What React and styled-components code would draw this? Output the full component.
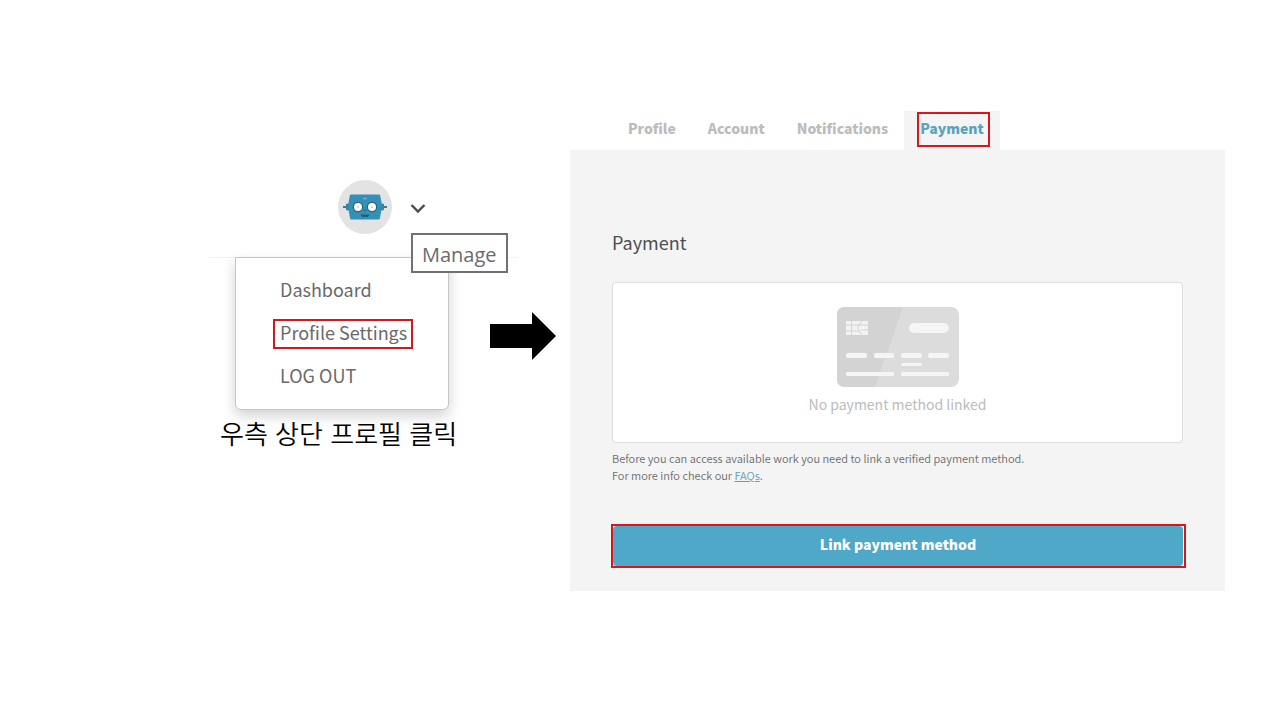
import styled, { createGlobalStyle } from "styled-components";
import { useState } from "react";

const GlobalStyle = createGlobalStyle`
  * {
    box-sizing: border-box;
  }
  body {
    margin: 0;
    background: #ffffff;
    font-family: "Noto Sans CJK KR", sans-serif;
  }
`;

const Guide = styled.main`
  display: flex;
  align-items: flex-start;
  padding: 111px 55px 0 209px;
`;

const ProfileStep = styled.section`
  width: 281px;
  flex-shrink: 0;
  margin-top: 69px;
`;

const ProfileHeader = styled.div`
  display: flex;
  align-items: flex-start;
  gap: 16px;
  height: 78px;
  margin-right: -28px;
  padding-left: 129px;
  border-bottom: 1px solid #f2f2f2;
`;

const ManageButton = styled.button`
  position: relative;
  width: 20px;
  height: 54px;
  padding: 0;
  border: none;
  background: none;
`;

const Tooltip = styled.span`
  position: absolute;
  z-index: 1;
  top: 53px;
  left: 3px;
  height: 40px;
  padding: 0 9px;
  border: 2px solid #707174;
  background: #ffffff;
  color: #6a6b6e;
  font-family: "Open Sans", sans-serif;
  font-size: 20px;
  line-height: 40px;
`;

const Menu = styled.nav`
  display: flex;
  flex-direction: column;
  align-items: flex-start;
  gap: 13px;
  width: 214px;
  margin: -1px 0 0 26px;
  padding: 18px 0 17px 37px;
  border: 1px solid #c6c6c6;
  border-radius: 0 0 6px 6px;
  background: #ffffff;
  box-shadow: 0 6px 14px rgba(0, 0, 0, 0.18);
`;

const MenuLink = styled.a`
  height: 30px;
  padding: 0 4px 0 5px;
  border: 2px solid ${(props) => (props.$marked ? "#d3191c" : "transparent")};
  color: #69696b;
  font-size: 18px;
  line-height: 22px;
  text-decoration: none;
`;

const Caption = styled.p`
  margin: 5px 0 0 11px;
  color: #000000;
  font-size: 26px;
  font-weight: 350;
  line-height: 36px;
  white-space: nowrap;
`;

const Arrow = styled.svg`
  width: 66px;
  height: 48px;
  flex-shrink: 0;
  margin: 201px 14px 0 0;
`;

const PaymentStep = styled.section`
  flex: 1;
  min-width: 0;
`;

const Tabs = styled.div`
  display: flex;
  padding-left: 42px;
`;

const Tab = styled.button`
  position: relative;
  height: 39px;
  padding: 0 16px 6px;
  border: none;
  background: ${(props) => (props.$active ? "#f4f4f4" : "transparent")};
  color: ${(props) => (props.$active ? "#5aa3bd" : "#bcbcbc")};
  font-family: inherit;
  font-size: 14px;
  font-weight: 900;
  line-height: 20px;
`;

const TabMark = styled.span`
  position: absolute;
  inset: 1px 10px 3px 13px;
  border: 2px solid #d9161b;
`;

const Panel = styled.div`
  padding: 80px 42px 23px;
  background: #f4f4f4;
`;

const Title = styled.h1`
  margin: 0 0 28px;
  color: #4a4f52;
  font-size: 18px;
  font-weight: 400;
  line-height: 24px;
`;

const MethodCard = styled.div`
  display: flex;
  flex-direction: column;
  align-items: center;
  gap: 5px;
  padding: 24px 24px 26px;
  border: 1px solid #dedede;
  border-radius: 4px;
  background: #ffffff;
`;

const EmptyText = styled.p`
  margin: 0;
  color: #bbbcbd;
  font-size: 14px;
  line-height: 24px;
`;

const Note = styled.p`
  margin: 7px 0 40px;
  color: #6c6e70;
  font-size: 11px;
  font-weight: 350;
  line-height: 17px;
`;

const NoteLink = styled.a`
  color: #5b9fbe;
`;

const ButtonFrame = styled.div`
  margin: 0 -3px 0 -1px;
  padding-right: 1px;
  border: 2px solid #d9161b;
`;

const LinkButton = styled.button`
  display: block;
  width: 100%;
  height: 40px;
  padding: 0 0 4px;
  border: none;
  border-radius: 4px;
  background: #4fa8c7;
  color: #ffffff;
  font-family: inherit;
  font-size: 14px;
  font-weight: 900;
`;

const menuItems = ["Dashboard", "Profile Settings", "LOG OUT"];
const tabNames = ["Profile", "Account", "Notifications", "Payment"];

function RobotAvatar() {
  return (
    <svg width="54" height="54" viewBox="0 0 54 54" aria-hidden="true">
      <circle cx="27" cy="27" r="27" fill="#e3e3e3" />
      <path d="M5 27h44" stroke="#4d7482" strokeWidth="2" />
      <path d="M8 24l4-1v8l-4-1zM46 24l-4-1v8l4-1z" fill="#3187a8" />
      <path
        d="M13 14.500h28q1 0 1.200 1l1.300 7-.5 10-1 5.500q-.2 1.500-1.500 1.500h-27q-1.300 0-1.500-1.500l-1-5.500-.5-10 1.300-7q.2-1 1.200-1z"
        fill="#3490b4"
      />
      <path d="M25 18.500h4" stroke="#69b4cf" strokeWidth="1.500" />
      <circle cx="20" cy="27" r="5.200" fill="#28637c" />
      <circle cx="34" cy="27" r="5.200" fill="#28637c" />
      <circle cx="20" cy="27" r="4" fill="#ffffff" />
      <circle cx="34" cy="27" r="4" fill="#ffffff" />
      <circle cx="20" cy="27" r="1" fill="#e3c8b8" />
      <circle cx="34" cy="27" r="1" fill="#e3c8b8" />
      <path d="M25.500 31l1.500-2 1.500 2z" fill="#28637c" />
      <path d="M23 34.500h8v1.500h-1v1h-6v-1h-1z" fill="#245f79" />
    </svg>
  );
}

function Chevron() {
  return (
    <svg width="20" height="54" viewBox="0 0 20 54" aria-hidden="true">
      <path
        d="M3.500 25l6.500 6.500 6.500-6.500"
        fill="none"
        stroke="#4b4b4d"
        strokeWidth="2.400"
      />
    </svg>
  );
}

function CreditCard() {
  return (
    <svg width="122" height="80" viewBox="0 0 122 80" aria-hidden="true">
      <rect width="122" height="80" rx="8" fill="#dcdcdc" />
      <path d="M8 0h58L38 80H8q-8 0-8-8V8q0-8 8-8z" fill="#d3d3d3" />
      <rect x="9" y="14" width="22" height="14" rx="1" fill="#f3f3f3" />
      <path
        d="M14.500 14v14M9 18h13M9 24h13M22 18l3-4M22 24l3 4M22 18q-2 3 0 6M22 18h9M24 23h7"
        fill="none"
        stroke="#d3d3d3"
      />
      <rect x="72" y="16" width="40" height="10" rx="5" fill="#f6f4f4" />
      <g fill="#f6f5f5">
        <rect x="9" y="46" width="21" height="5" rx="2" />
        <rect x="37" y="46" width="20" height="5" rx="2" />
        <rect x="64" y="46" width="21" height="5" rx="2" />
        <rect x="91" y="46" width="21" height="5" rx="2" />
        <rect x="64" y="56" width="21" height="3" rx="1.500" />
        <rect x="9" y="65" width="48" height="4" rx="1.500" />
        <rect x="64" y="65" width="48" height="4" rx="1.500" />
      </g>
    </svg>
  );
}

function App() {
  const [activeTab, setActiveTab] = useState("Payment");
  return (
    <>
      <GlobalStyle />
      <Guide>
        <ProfileStep>
          <ProfileHeader>
            <RobotAvatar />
            <ManageButton type="button" aria-label="Manage">
              <Chevron />
              <Tooltip>Manage</Tooltip>
            </ManageButton>
          </ProfileHeader>
          <Menu>
            {menuItems.map((item) => (
              <MenuLink
                key={item}
                href="#"
                $marked={item === "Profile Settings"}
              >
                {item}
              </MenuLink>
            ))}
          </Menu>
          <Caption lang="ko">우측 상단 프로필 클릭</Caption>
        </ProfileStep>

        <Arrow viewBox="0 0 66 48" aria-hidden="true">
          <path d="M0 12h42V0l24 24-24 24V36H0z" fill="#000000" />
        </Arrow>

        <PaymentStep>
          <Tabs>
            {tabNames.map((name) => (
              <Tab
                key={name}
                type="button"
                $active={name === activeTab}
                onClick={() => setActiveTab(name)}
              >
                {name}
                {name === "Payment" && <TabMark />}
              </Tab>
            ))}
          </Tabs>
          <Panel>
            <Title>Payment</Title>
            <MethodCard>
              <CreditCard />
              <EmptyText>No payment method linked</EmptyText>
            </MethodCard>
            <Note>
              Before you can access available work you need to link a verified
              payment method.
              <br />
              For more info check our <NoteLink href="#">FAQs</NoteLink>.
            </Note>
            <ButtonFrame>
              <LinkButton type="button">Link payment method</LinkButton>
            </ButtonFrame>
          </Panel>
        </PaymentStep>
      </Guide>
    </>
  );
}

export default App;
